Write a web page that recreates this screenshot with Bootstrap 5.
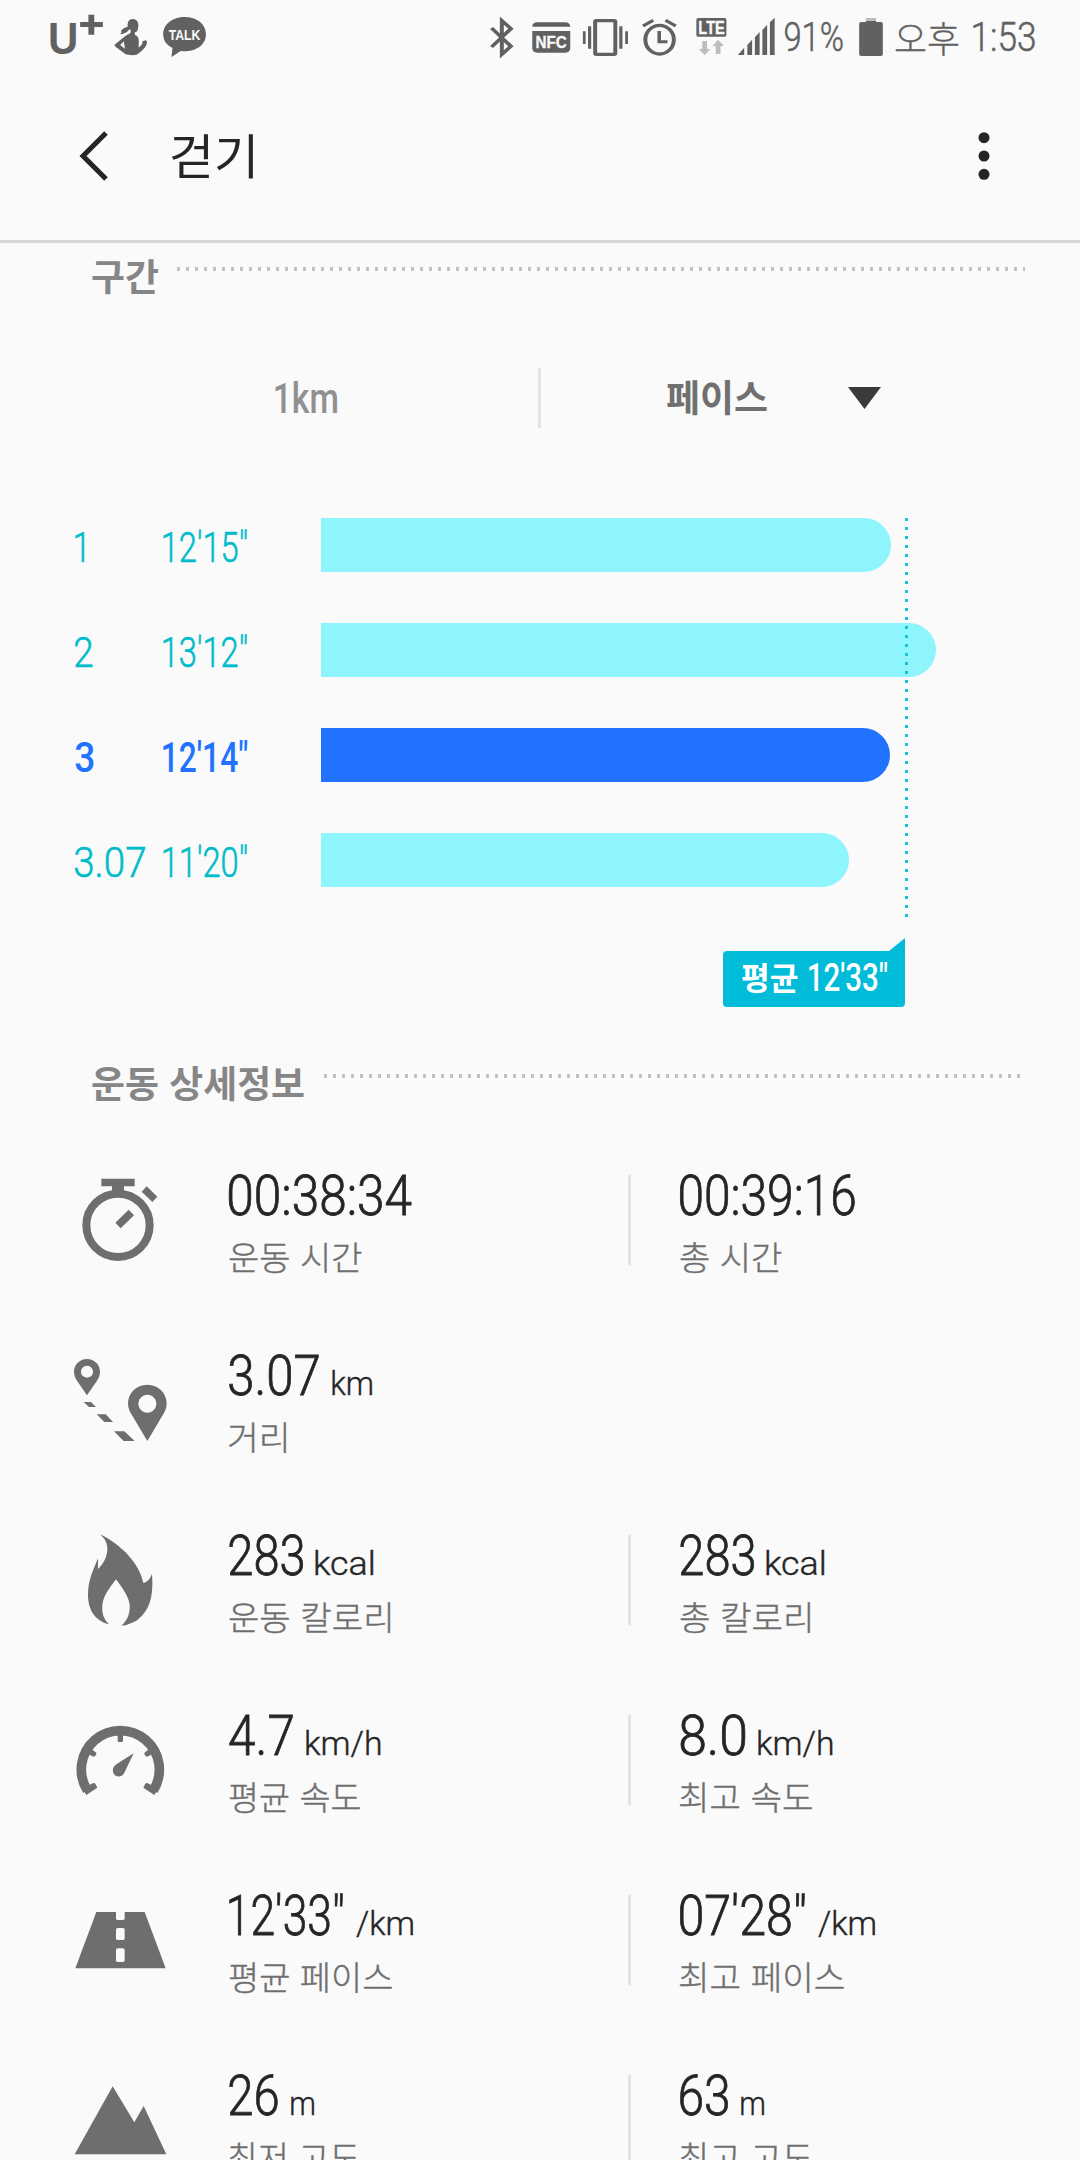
<!DOCTYPE html>
<html lang="ko">
<head>
<meta charset="utf-8">
<meta name="viewport" content="width=device-width, initial-scale=1">
<title>걷기</title>
<link href="https://cdn.jsdelivr.net/npm/bootstrap@5.3.0/dist/css/bootstrap.min.css" rel="stylesheet">
<style>
html,body{height:2160px;overflow:hidden}
body{width:1080px;background:#fafafa;color:#252525;font-family:Roboto,"Noto Sans CJK KR",sans-serif}
svg{display:block;flex:none;overflow:visible}
/* condensed text: the script squeezes each .fit to its data-w width */
.fit{display:inline-block;white-space:pre;transform-origin:0 50%;flex:none}
.ko{font-family:"Noto Sans CJK KR",sans-serif}
.statusbar{height:72px;color:#616161;fill:#616161}
.st-text{font-size:41px;line-height:60px;font-weight:300;padding-top:7px;-webkit-text-stroke:.5px}
.st-ko{font-size:36px;line-height:60px;font-weight:300;padding-top:7px;-webkit-text-stroke:.3px}
.appbar{height:171px;border-bottom:3px solid #d6d6d6}
.appbar .fit{font-size:48px;line-height:60px;margin-left:63px;margin-top:-7px}
.sec-head{padding:10px 0 0 92px}
.sec-head .fit{font-size:37px;line-height:44px;font-weight:700;color:#868686}
.dots{height:4px;margin-top:14px;background:repeating-linear-gradient(90deg,#c2c2c2 0 3px,transparent 3px 9px)}
.tabs{height:60px;margin-top:71px}
.tabs>div{height:60px}
.tab-km{width:538px;padding-left:275px;font-size:43px;line-height:60px;color:#909090;font-weight:500}
.tab-pace{border-left:3px solid #e3e3e3;padding-left:126px;color:#707070}
.tab-pace .fit{font-size:37px;line-height:56px;font-weight:700}
.tri{margin:19px 0 0 81px}
.chart{margin-top:90px;gap:51px;color:#00bccb}
.lap{height:54px;padding-left:75px;font-size:43px;font-weight:300;line-height:58px;-webkit-text-stroke:.6px}
.lap-no{width:88px}
.lap-pace{width:158px}
.lap-fill{height:54px;background:#8ff5fd;border-radius:0 27px 27px 0}
.lap-best{color:#2172ff;font-weight:500;-webkit-text-stroke:0}
.lap-best .lap-fill{background:#2172ff}
.avg-line{left:905px;top:0;width:3px;height:399px;background:repeating-linear-gradient(180deg,#19c2d8 0 3px,transparent 3px 9px)}
.avg-tip{width:182px;height:56px;margin:64px 0 0 723px;padding-left:19px;background:#00bcd8;border-radius:4px 0 4px 4px;color:#fff}
.avg-tip::before{content:"";position:absolute;right:0;top:-13px;border-style:solid;border-width:0 0 13px 16px;border-color:transparent transparent #00bcd8 transparent}
.avg-tip .ko{font-size:32px;font-weight:700;line-height:50px}
.avg-tip .num{font-size:39px;font-weight:500;line-height:54px;margin-left:11px}
.detail-head{margin-top:43px}
.details{margin-top:51px}
.metric{height:180px;padding:10px 0 0 70px}
.metric-icon{fill:#6e6e6e;width:100px;height:100px}
.metric-col{width:458px;padding-left:59px;flex:none}
.sep+.metric-col{width:400px;padding-left:49px}
.sep{border-left:3px solid #e3e3e3;height:90px;margin-top:10px;width:3px;flex:none}
.val{height:60px;line-height:60px;font-size:56px;font-weight:300;-webkit-text-stroke:.8px;padding-top:1px}
.unit{font-size:34px;line-height:40px;-webkit-text-stroke:.4px}
.lab{margin-top:11px;font-size:33px;line-height:40px;color:#6f6f6f;font-weight:300;-webkit-text-stroke:.4px}
</style>
</head>
<body>
<div class="statusbar d-flex align-items-start">
  <svg width="162" height="45" viewBox="135 45 470 135" preserveAspectRatio="none" style="margin:15px 0 0 46px">
    <text x="141" y="161" font-family="Liberation Sans" font-weight="700" font-size="134" textLength="88" lengthAdjust="spacingAndGlyphs">U</text>
    <path d="M258 44h17v22h25v15h-25v23h-17V81h-24V66h24z"/>
    <path d="M385 57c12 0 18 8 18 20l-2 14c-2 4-5 5-8 6v8c7 3 10 7 11 14v24l10-10 1-9 8-3 5 2-1 10c-2 8-8 13-13 18-6 6-10 10-16 13-10 2-22 2-32-1l-31-24-1-5 31-26 8-5c5-2 7-4 8-8l-1-7c-4 1-6 3-8 6-6 5-13 8-20 9l-1-4 5-3-4-2c5-10 14-12 20-14-1-14 3-22 13-22zM361 124l-11 11 14 11z" fill-rule="evenodd"/>
    <path d="M537 51c36 0 62 21 62 52 0 35-32 51-62 51l-11-1-27 18 3-27c-17-8-27-22-27-41 0-31 28-52 62-52z"/>
    <text x="491" y="120" fill="#fafafa" font-family="Liberation Sans" font-weight="700" font-size="43" textLength="92" lengthAdjust="spacingAndGlyphs">TALK</text>
  </svg>
  <svg width="291" height="45" viewBox="70 45 736 135" preserveAspectRatio="none" style="margin:15px 0 0 280px">
    <path d="M79 84l49 55-23 24V62l23 24-49 55" fill="none" stroke="#616161" stroke-width="10"/>
    <path d="M182 80c0-8 5-13 12-13h72c7 0 12 5 12 13zM182 93h96v52c0 8-5 13-12 13h-72c-7 0-12-5-12-13z"/>
    <text x="190" y="143" fill="#fafafa" stroke="#fafafa" font-family="Liberation Sans" font-weight="700" font-size="50" textLength="79" lengthAdjust="spacingAndGlyphs">NFC</text>
    <rect x="341" y="62" width="51" height="101" rx="3" fill="none" stroke="#616161" stroke-width="10"/>
    <path d="M310 94h7v38h-7zM323 79h8v67h-8zM402 79h8v67h-8zM417 94h7v38h-7z"/>
    <ellipse cx="504" cy="119" rx="36" ry="43" fill="none" stroke="#616161" stroke-width="10"/>
    <path d="M503 93v32h21M462 78l26-17M519 61l26 17" fill="none" stroke="#616161" stroke-width="9"/>
    <rect x="597" y="54" width="76" height="56" rx="5"/>
    <text x="602" y="101" fill="#fafafa" stroke="#fafafa" font-family="Liberation Sans" font-weight="700" font-size="53" textLength="67" lengthAdjust="spacingAndGlyphs">LTE</text>
    <path d="M612 123h12v24h8l-14 19-15-19h9zM646 162v-24h-8l14-19 15 19h-9v24z" fill="#bdbdbd"/>
    <path d="M702 165l16-22v22zM726 135l12-16v46h-12zM745 112l12-16v69h-12zM764 90l12-16v91h-12zM783 67l12-14v112h-12z"/>
  </svg>
  <span class="fit st-text" data-w="58" style="margin-left:6px">91%</span>
  <svg width="26" height="45" viewBox="1007 45 66 135" preserveAspectRatio="none" style="margin:15px 0 0 15px">
    <path d="M1027 54h26v10h-26z" fill="#bdbdbd"/><path d="M1015 66h12v-3h26v3h12q5 0 5 5v92q0 5-5 5h-50q-5 0-5-5V71q0-5 5-5z"/>
  </svg>
  <span class="fit ko st-ko" data-w="64" style="margin-left:11px">오후</span>
  <span class="fit st-text" data-w="62" style="margin-left:14px">1:53</span>
</div>

<header class="appbar d-flex align-items-center">
  <svg width="28" height="50" viewBox="0 0 28 50" style="margin-left:80px"><path d="M26 2L3 25l23 23" fill="none" stroke="#252525" stroke-width="5"/></svg>
  <span class="fit ko" data-w="83">걷기</span>
  <svg class="ms-auto" width="12" height="50" viewBox="0 0 12 50" fill="#252525" style="margin-right:90px"><circle cx="6" cy="6.7" r="5.5"/><circle cx="6" cy="25" r="5.5"/><circle cx="6" cy="43.3" r="5.5"/></svg>
</header>

<main>
  <div class="sec-head d-flex"><span class="fit ko" data-w="66">구간</span><div class="dots" style="width:848px;margin-left:19px"></div></div>

  <div class="tabs d-flex">
    <div class="tab-km"><span class="fit" data-w="62">1km</span></div>
    <div class="tab-pace d-flex align-items-start"><span class="fit ko" data-w="100">페이스</span>
      <svg class="tri" width="33" height="22" viewBox="0 0 33 22"><path d="M0 0h33L16.500 22z" fill="#3a3a3a"/></svg></div>
  </div>

  <section class="chart d-flex flex-column position-relative">
    <div class="lap d-flex"><div class="lap-no"><span class="fit" data-w="9">1</span></div><div class="lap-pace"><span class="fit" data-w="84">12'15"</span></div><div class="lap-fill" style="width:570px"></div></div>
    <div class="lap d-flex"><div class="lap-no"><span class="fit" data-w="18">2</span></div><div class="lap-pace"><span class="fit" data-w="84">13'12"</span></div><div class="lap-fill" style="width:615px"></div></div>
    <div class="lap lap-best d-flex"><div class="lap-no"><span class="fit" data-w="19">3</span></div><div class="lap-pace"><span class="fit" data-w="84">12'14"</span></div><div class="lap-fill" style="width:569px"></div></div>
    <div class="lap d-flex"><div class="lap-no"><span class="fit" data-w="70">3.07</span></div><div class="lap-pace"><span class="fit" data-w="84">11'20"</span></div><div class="lap-fill" style="width:528px"></div></div>
    <div class="avg-line position-absolute"></div>
  </section>
  <div class="avg-tip d-flex position-relative"><span class="fit ko" data-w="56">평균</span><span class="fit num" data-w="78">12'33"</span></div>

  <div class="sec-head detail-head d-flex"><span class="fit ko" data-w="212">운동 상세정보</span><div class="dots" style="width:699px;margin-left:20px"></div></div>

  <section class="details">
    <div class="metric d-flex">
      <svg class="metric-icon" viewBox="60 75 300 300"><circle cx="204" cy="256" r="95" fill="none" stroke="#6e6e6e" stroke-width="24"/><path d="M154 116h100v23h-32v18h-36v-18h-32zM290 139l32 31-15 16-32-31zM236 209l16 17-40 39-16-17z"/></svg>
      <div class="metric-col"><div class="val d-flex align-items-baseline"><span class="fit" data-w="183">00:38:34</span></div><div class="lab ko"><span class="fit" data-w="133">운동 시간</span></div></div>
      <div class="sep"></div>
      <div class="metric-col"><div class="val d-flex align-items-baseline"><span class="fit" data-w="175">00:39:16</span></div><div class="lab ko"><span class="fit" data-w="102">총 시간</span></div></div>
    </div>
    <div class="metric d-flex">
      <svg class="metric-icon" viewBox="60 615 300 300"><path fill-rule="evenodd" d="M111 657c22 0 39 17 39 38 0 12-5 21-11 30l-28 41-28-41c-6-9-11-18-11-30 0-21 17-38 39-38zM111 677a18 18 0 1 0 .1 0zM292 734c33 0 58 25 58 56 0 16-6 27-13 37l-45 76-45-76c-7-10-13-21-13-37 0-31 25-56 58-56zM292 764a27 27 0 1 0 .1 0zM101 786h22l15 15h-21zM140 823h27l22 23h-26zM192 874h31l31 29h-33z"/></svg>
      <div class="metric-col"><div class="val d-flex align-items-baseline"><span class="fit" data-w="90">3.07</span><span class="fit unit" data-w="40" style="margin-left:13px">km</span></div><div class="lab ko"><span class="fit" data-w="57">거리</span></div></div>
    </div>
    <div class="metric d-flex">
      <svg class="metric-icon" viewBox="60 195 300 300"><path d="M150 223C215 255 268 310 280 369q19-6 26-28c4 55-2 96-30 126q-22 25-62 30c20-18 26-37 25-62-2-24-22-52-41-77-19 25-38 50-41 77-2 24 4 42 20 58-47-12-63-50-63-88 0-43 14-71 30-110v32c19-18 28-40 28-60 0-19-9-33-22-44z"/></svg>
      <div class="metric-col"><div class="val d-flex align-items-baseline"><span class="fit" data-w="74">283</span><span class="fit unit" data-w="58" style="margin-left:12px">kcal</span></div><div class="lab ko"><span class="fit" data-w="161">운동 칼로리</span></div></div>
      <div class="sep"></div>
      <div class="metric-col"><div class="val d-flex align-items-baseline"><span class="fit" data-w="74">283</span><span class="fit unit" data-w="58" style="margin-left:12px">kcal</span></div><div class="lab ko"><span class="fit" data-w="130">총 칼로리</span></div></div>
    </div>
    <div class="metric d-flex">
      <svg class="metric-icon" viewBox="60 735 300 300"><path d="M112 991A117 117 0 1 1 310 991" fill="none" stroke="#6e6e6e" stroke-width="29"/><path d="M203 820h16v22q0 4-4 4h-8q-4 0-4-4zM124 867l12 9q5 4 2 8l-3 4q-3 4-8 1l-13-8zM298 867l-12 9q-5 4-2 8l3 4q3 4 8 1l13-8zM109 1005l33-22-5-10q-4-6-9-3l-30 17zM313 1005l-33-22 5-10q4-6 9-3l30 17zM251 880l-28 58c-8 16-28 14-33 1-4-12 0-19 9-26z"/></svg>
      <div class="metric-col"><div class="val d-flex align-items-baseline"><span class="fit" data-w="64">4.7</span><span class="fit unit" data-w="75" style="margin-left:13px">km/h</span></div><div class="lab ko"><span class="fit" data-w="131">평균 속도</span></div></div>
      <div class="sep"></div>
      <div class="metric-col"><div class="val d-flex align-items-baseline"><span class="fit" data-w="65">8.0</span><span class="fit unit" data-w="75" style="margin-left:13px">km/h</span></div><div class="lab ko"><span class="fit" data-w="132">최고 속도</span></div></div>
    </div>
    <div class="metric d-flex">
      <svg class="metric-icon" viewBox="60 195 300 300"><path d="M139 276h145l63 169H76z"/><g fill="#fafafa"><path d="M198 275h26v20q0 5-5 5h-16q-5 0-5-5z"/><rect x="198" y="324" width="26" height="36" rx="5"/><rect x="198" y="385" width="26" height="41" rx="5"/></g></svg>
      <div class="metric-col"><div class="val d-flex align-items-baseline"><span class="fit" data-w="114">12'33"</span><span class="fit unit" data-w="57" style="margin-left:13px">/km</span></div><div class="lab ko"><span class="fit" data-w="163">평균 페이스</span></div></div>
      <div class="sep"></div>
      <div class="metric-col"><div class="val d-flex align-items-baseline"><span class="fit" data-w="125">07'28"</span><span class="fit unit" data-w="57" style="margin-left:13px">/km</span></div><div class="lab ko"><span class="fit" data-w="164">최고 페이스</span></div></div>
    </div>
    <div class="metric d-flex">
      <svg class="metric-icon" viewBox="60 735 300 300"><path d="M188 799l65 108 28-49 68 145H74z"/></svg>
      <div class="metric-col"><div class="val d-flex align-items-baseline"><span class="fit" data-w="49">26</span><span class="fit unit" data-w="23" style="margin-left:13px">m</span></div><div class="lab ko"><span class="fit" data-w="130">최저 고도</span></div></div>
      <div class="sep"></div>
      <div class="metric-col"><div class="val d-flex align-items-baseline"><span class="fit" data-w="48">63</span><span class="fit unit" data-w="23" style="margin-left:13px">m</span></div><div class="lab ko"><span class="fit" data-w="132">최고 고도</span></div></div>
    </div>
  </section>
</main>
<script src="https://cdn.jsdelivr.net/npm/bootstrap@5.3.0/dist/js/bootstrap.bundle.min.js"></script>
<script>
// Squeeze every .fit so that its visible glyphs span exactly data-w pixels.
const ctx = document.createElement('canvas').getContext('2d');
document.querySelectorAll('.fit').forEach(el => {
  const cs = getComputedStyle(el), w = +el.dataset.w;
  ctx.font = cs.fontWeight + ' ' + cs.fontSize + ' ' + cs.fontFamily;
  const m = ctx.measureText(el.textContent);
  const natural = el.getBoundingClientRect().width;
  const s = w / (m.actualBoundingBoxRight + m.actualBoundingBoxLeft) * (m.width / natural);
  el.style.transform = `translateX(${m.actualBoundingBoxLeft * s}px) scaleX(${s})`;
  el.style.marginRight = (w - natural) + 'px';
});
</script>
</body>
</html>
